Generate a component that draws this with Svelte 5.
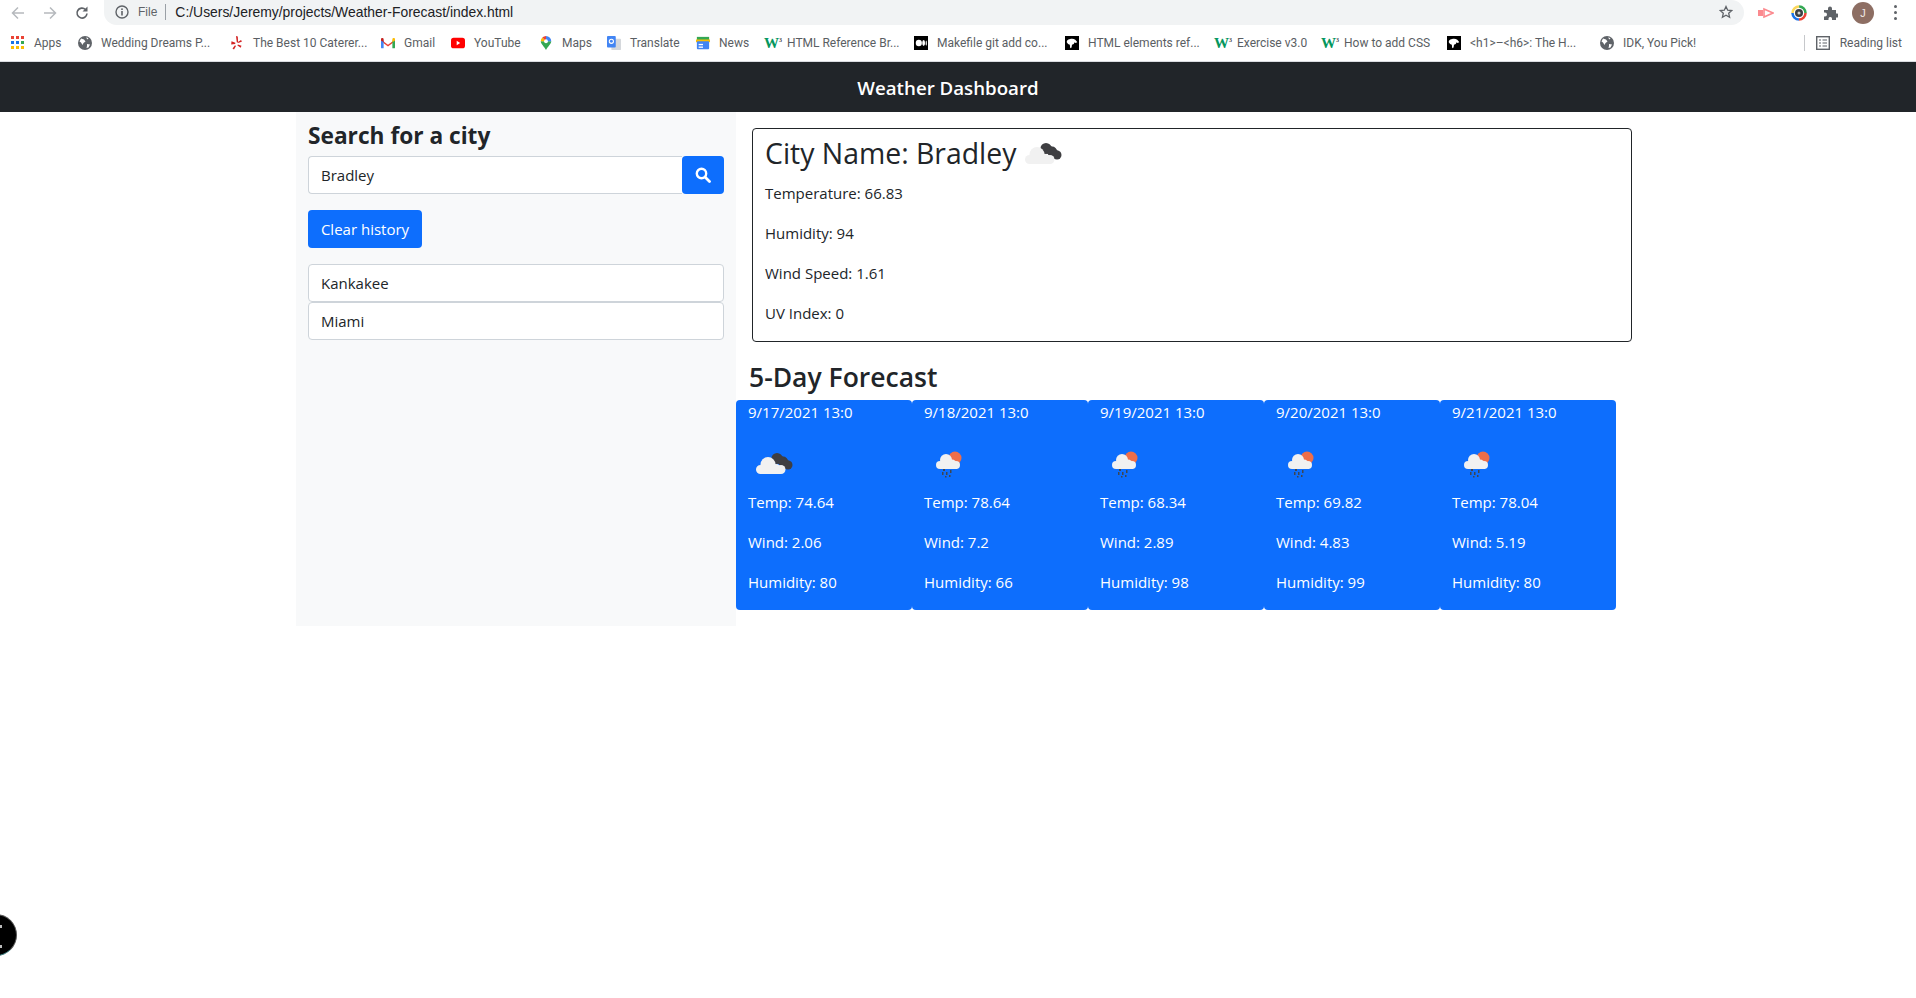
<script>
  const bookmarks = [
    { name: 'Apps', icon: 'apps', w: 67 },
    { name: 'Wedding Dreams P...', icon: 'globe', w: 152 },
    { name: 'The Best 10 Caterer...', icon: 'yelp', w: 151 },
    { name: 'Gmail', icon: 'gmail', w: 70 },
    { name: 'YouTube', icon: 'youtube', w: 88 },
    { name: 'Maps', icon: 'maps', w: 68 },
    { name: 'Translate', icon: 'translate', w: 89 },
    { name: 'News', icon: 'news', w: 68 },
    { name: 'HTML Reference Br...', icon: 'w3', w: 150 },
    { name: 'Makefile git add co...', icon: 'medium', w: 151 },
    { name: 'HTML elements ref...', icon: 'mdn', w: 149 },
    { name: 'Exercise v3.0', icon: 'w3', w: 107 },
    { name: 'How to add CSS', icon: 'w3', w: 126 },
    { name: '<h1>–<h6>: The H...', icon: 'mdn', w: 153 },
    { name: 'IDK, You Pick!', icon: 'globe', w: 110 }
  ]

  const forecast = [
    { date: '9/17/2021 13:0', temp: 74.64, wind: 2.06, humidity: 80, rain: false },
    { date: '9/18/2021 13:0', temp: 78.64, wind: 7.2, humidity: 66, rain: true },
    { date: '9/19/2021 13:0', temp: 68.34, wind: 2.89, humidity: 98, rain: true },
    { date: '9/20/2021 13:0', temp: 69.82, wind: 4.83, humidity: 99, rain: true },
    { date: '9/21/2021 13:0', temp: 78.04, wind: 5.19, humidity: 80, rain: true }
  ]

  const history = ['Kankakee', 'Miami']
</script>

{#snippet cloudy()}
  <svg class="weather" viewBox="0 0 50 50" aria-hidden="true">
    <g fill="#3f3f42">
      <circle cx="29" cy="18.500" r="5.500" />
      <circle cx="35" cy="21.500" r="5" />
      <circle cx="40" cy="25" r="4.500" />
      <path d="M25 20l6-6 13 9-4 6z" />
    </g>
    <g fill="#f1f1f1">
      <circle cx="12.500" cy="29.500" r="4.500" />
      <circle cx="20" cy="24.500" r="7.500" />
      <circle cx="28" cy="29" r="5" />
      <circle cx="33" cy="29.500" r="4.500" />
      <rect x="12" y="28" width="21" height="6" />
    </g>
  </svg>
{/snippet}

{#snippet rainy()}
  <svg class="weather" viewBox="0 0 50 50" aria-hidden="true">
    <circle cx="31" cy="18" r="6.500" fill="#ee6e49" />
    <g fill="#f1f1f1">
      <circle cx="16" cy="25" r="4" />
      <circle cx="22" cy="20" r="6" />
      <circle cx="28" cy="24" r="4.500" />
      <circle cx="32" cy="25" r="4" />
      <rect x="16" y="24" width="17" height="5" />
    </g>
    <g fill="#3f4650">
      <rect x="19" y="29" width="2" height="2" />
      <rect x="18" y="32" width="1.500" height="3" />
      <rect x="22" y="32" width="1.500" height="3" />
      <rect x="26" y="30" width="1.500" height="3" />
      <rect x="25" y="35" width="1.500" height="2" />
      <rect x="21" y="36" width="1.500" height="1.500" />
    </g>
  </svg>
{/snippet}

{#snippet bookmarkIcon(kind)}
  {#if kind === 'apps'}
    <svg class="bm-icon" viewBox="0 0 14 14">
      <g fill="#ea4335"><rect x="0" y="0" width="3" height="3" /><rect x="5" y="0" width="3" height="3" /><rect x="10" y="0" width="3" height="3" /></g>
      <g fill="#1a73e8"><rect x="0" y="5" width="3" height="3" /><rect x="5" y="5" width="3" height="3" /></g>
      <rect x="10" y="5" width="3" height="3" fill="#34a853" />
      <g fill="#fbbc04"><rect x="0" y="10" width="3" height="3" /><rect x="5" y="10" width="3" height="3" /></g>
      <rect x="10" y="10" width="3" height="3" fill="#fbbc04" />
    </svg>
  {:else if kind === 'globe'}
    <svg class="bm-icon" viewBox="0 0 14 14">
      <circle cx="7" cy="7" r="7" fill="#5f6368" />
      <path fill="#fff" d="M3 2.500l3 1 1.500 2-2 1.500-1 2-1.500-2.500-1.500-1zM9 8l3 .5-1.500 3-2 .5.500-2zM8 1.500l2.500.5-1 1.500z" />
    </svg>
  {:else if kind === 'yelp'}
    <svg class="bm-icon" viewBox="0 0 14 14" fill="#d32323">
      <path d="M6 0l1.800.4.300 5.800-1.300.3zM1.500 5.300l3.900 1.400-.2 1.300-4 .4zM5 9.300l1 .8-2 3.500-1.500-1.100zM7.900 8.600l3.600 1.200-.8 1.900-3.300-2.100zM8 6l3-2.100 1 1.700-3.600 1.400z" />
    </svg>
  {:else if kind === 'gmail'}
    <svg class="bm-icon" viewBox="0 0 16 12">
      <path fill="#ea4335" d="M0 2l8 6 8-6v2L8 10 0 4z" />
      <path fill="#4285f4" d="M0 3h3v9H1a1 1 0 0 1-1-1z" />
      <path fill="#34a853" d="M13 3h3v8a1 1 0 0 1-1 1h-2z" />
      <path fill="#c5221f" d="M0 2a1.500 1.500 0 0 1 3-.5V5L0 3z" />
      <path fill="#fbbc04" d="M16 2a1.500 1.500 0 0 0-3-.5V5l3-2z" />
    </svg>
  {:else if kind === 'youtube'}
    <svg class="bm-icon" viewBox="0 0 16 12">
      <rect width="16" height="12" rx="3" fill="#f00" />
      <path d="M6.500 3.500l4 2.500-4 2.500z" fill="#fff" />
    </svg>
  {:else if kind === 'maps'}
    <svg class="bm-icon" viewBox="0 0 12 16">
      <path fill="#34a853" d="M6 16C4 12 0 9 0 6h12c0 3-4 6-6 10z" />
      <path fill="#fbbc04" d="M0 6a6 6 0 0 1 1.800-4.200L6 6z" />
      <path fill="#4285f4" d="M6 0a6 6 0 0 1 6 6H6z" />
      <path fill="#ea4335" d="M1.800 1.800A6 6 0 0 1 6 0v6z" />
      <circle cx="6" cy="6" r="2.200" fill="#fff" />
    </svg>
  {:else if kind === 'translate'}
    <svg class="bm-icon" viewBox="0 0 16 16">
      <rect x="5" y="3" width="11" height="13" rx="1" fill="#d5d8dc" />
      <rect x="0" y="0" width="10" height="13" rx="1" fill="#4285f4" />
      <circle cx="5" cy="6" r="2.400" fill="none" stroke="#fff" stroke-width="1.200" />
    </svg>
  {:else if kind === 'news'}
    <svg class="bm-icon" viewBox="0 0 16 16">
      <rect x="1" y="1" width="14" height="4" fill="#34a853" />
      <rect x="0" y="4" width="16" height="3" fill="#fbbc04" />
      <rect x="1" y="6" width="14" height="9" rx="1" fill="#4285f4" />
      <rect x="3" y="9" width="5" height="1.500" fill="#fff" />
      <rect x="3" y="12" width="5" height="1.500" fill="#fff" />
    </svg>
  {:else if kind === 'w3'}
    <span class="w3">W<sup>3</sup></span>
  {:else if kind === 'medium'}
    <svg class="bm-icon" viewBox="0 0 16 16">
      <rect width="16" height="16" fill="#000" />
      <ellipse cx="5.500" cy="8" rx="3.500" ry="3.800" fill="#fff" />
      <ellipse cx="11" cy="8" rx="1.600" ry="3.400" fill="#fff" />
      <ellipse cx="14" cy="8" rx=".7" ry="3" fill="#fff" />
    </svg>
  {:else if kind === 'mdn'}
    <svg class="bm-icon" viewBox="0 0 16 16">
      <rect width="16" height="16" fill="#000" />
      <path fill="#fff" d="M2 7c0-3 3-4 6-4s5 2 6 4l-2 1-1-1-1 2-2 1-.5 3-1.500 1-.5-4-2-1z" />
    </svg>
  {/if}
{/snippet}

<div class="toolbar">
  <div class="nav-icons">
    <svg viewBox="0 0 14 14" class="nav-btn"><path d="M13 7H2M7 1.500L1.500 7 7 12.500" fill="none" stroke="#b6b9bd" stroke-width="1.500" /></svg>
    <svg viewBox="0 0 14 14" class="nav-btn"><path d="M1 7h11M7 1.500L12.500 7 7 12.500" fill="none" stroke="#b6b9bd" stroke-width="1.500" /></svg>
    <svg viewBox="0 0 14 14" class="nav-btn reload"><path d="M12 7.500A5 5 0 1 1 10.500 3.500" fill="none" stroke="#5f6368" stroke-width="1.600" /><path d="M12.500 .5v5h-5z" fill="#5f6368" /></svg>
  </div>
  <div class="omnibox">
    <svg viewBox="0 0 14 14" class="info"><circle cx="7" cy="7" r="6" fill="none" stroke="#5f6368" stroke-width="1.400" /><rect x="6.200" y="6" width="1.600" height="4.500" fill="#5f6368" /><rect x="6.200" y="3.400" width="1.600" height="1.600" fill="#5f6368" /></svg>
    <span class="scheme">File</span>
    <span class="sep"></span>
    <span class="url">C:/Users/Jeremy/projects/Weather-Forecast/index.html</span>
    <svg viewBox="0 0 14 14" class="star"><path d="M7 1.500l1.700 3.700 4 .4-3 2.700.9 4L7 10.300l-3.600 2 .9-4-3-2.700 4-.4z" fill="none" stroke="#5f6368" stroke-width="1.300" /></svg>
  </div>
  <div class="extensions">
    <svg viewBox="0 0 16 10" class="ext"><rect x="0" y="2" width="5" height="6" fill="#fb8a8f" /><path d="M6 1l9 4-9 4z" fill="none" stroke="#fb8a8f" stroke-width="1.600" /></svg>
    <svg viewBox="0 0 16 16" class="ext color"><circle cx="8" cy="8" r="6.500" fill="none" stroke="#ea4335" stroke-width="2.500" stroke-dasharray="10 31" /><circle cx="8" cy="8" r="6.500" fill="none" stroke="#1a73e8" stroke-width="2.500" stroke-dasharray="10 31" stroke-dashoffset="-10" /><circle cx="8" cy="8" r="6.500" fill="none" stroke="#fbd75b" stroke-width="2.500" stroke-dasharray="10 31" stroke-dashoffset="-20" /><circle cx="8" cy="8" r="6.500" fill="none" stroke="#34a853" stroke-width="2.500" stroke-dasharray="10 31" stroke-dashoffset="-30" /><circle cx="8" cy="8" r="4" fill="#3c4043" /><circle cx="8" cy="8" r="1.500" fill="#ccc" /></svg>
    <svg viewBox="0 0 14 14" class="ext puzzle"><path fill="#5f6368" d="M0 4h4V2.500a2 2 0 0 1 4 0V4h4v3.500h1a2 2 0 0 1 0 4h-1V14H8v-1.500a1.800 1.800 0 0 0-3.500 0V14H0v-3.500h1a2 2 0 0 0 0-4H0z" /></svg>
    <span class="avatar">J</span>
    <span class="dots"><i></i><i></i><i></i></span>
  </div>
</div>

<div class="bookmarks">
  <div class="bm-list">
    {#each bookmarks as bm}
      <span class="bm" style="width: {bm.w}px">
        <span class="bm-slot">{@render bookmarkIcon(bm.icon)}</span>
        <span class="bm-name">{bm.name}</span>
      </span>
    {/each}
  </div>
  <div class="reading">
    <svg viewBox="0 0 14 14" class="bm-icon"><rect x=".7" y=".7" width="12.600" height="12.600" fill="none" stroke="#5f6368" stroke-width="1.400" /><path d="M3 4h2M6.500 4H11M3 7h2M6.500 7H11M3 10h2M6.500 10H11" stroke="#5f6368" stroke-width="1.200" /></svg>
    <span class="bm-name">Reading list</span>
  </div>
</div>

<header class="navbar">
  <span class="brand">Weather Dashboard</span>
</header>

<main class="page">
  <aside class="sidebar">
    <h2 class="search-title">Search for a city</h2>
    <form class="search" on:submit|preventDefault>
      <input type="text" value="Bradley" />
      <button class="btn search-btn" type="submit" aria-label="Search">
        <svg viewBox="0 0 16 16"><circle cx="6.500" cy="6.500" r="4.700" fill="none" stroke="#fff" stroke-width="2.400" /><path d="M10 10l4.500 4.500" stroke="#fff" stroke-width="2.800" stroke-linecap="round" /></svg>
      </button>
    </form>
    <button class="btn clear" type="button">Clear history</button>
    <ul class="history">
      {#each history as city}
        <li>{city}</li>
      {/each}
    </ul>
  </aside>

  <section class="content">
    <div class="today">
      <h2 class="city">City Name: Bradley {@render cloudy()}</h2>
      <p>Temperature: 66.83</p>
      <p>Humidity: 94</p>
      <p>Wind Speed: 1.61</p>
      <p>UV Index: 0</p>
    </div>

    <h3 class="forecast-title">5-Day Forecast</h3>
    <div class="forecast">
      {#each forecast as day}
        <div class="day">
          <p>{day.date}</p>
          <div class="day-icon">
            {#if day.rain}{@render rainy()}{:else}{@render cloudy()}{/if}
          </div>
          <p>Temp: {day.temp}</p>
          <p>Wind: {day.wind}</p>
          <p>Humidity: {day.humidity}</p>
        </div>
      {/each}
    </div>
  </section>
</main>

<div class="launcher"><i></i><i></i></div>

<style>
  :global(body) {
    margin: 0;
    background: #fff;
    color: #212529;
    font-family: "Open Sans", "Noto Sans", sans-serif;
    font-size: 15px;
    line-height: 24px;
  }

  .toolbar {
    display: flex;
    height: 25px;
    overflow: hidden;
  }
  .nav-icons {
    display: flex;
    align-items: center;
    gap: 18px;
    width: 104px;
    padding-left: 11px;
    box-sizing: border-box;
  }
  .nav-btn {
    width: 14px;
    height: 14px;
  }
  .omnibox {
    display: flex;
    align-items: center;
    width: 1640px;
    height: 25px;
    padding: 0 11px 2px;
    box-sizing: border-box;
    background: #f1f3f4;
    border-radius: 0 14px 14px 14px;
    font-size: 12px;
    font-family: "Liberation Sans", sans-serif;
  }
  .info {
    width: 14px;
    height: 14px;
  }
  .scheme {
    margin-left: 9px;
    color: #5f6368;
  }
  .sep {
    width: 1px;
    height: 16px;
    margin: 0 9px 0 8px;
    background: #9aa0a6;
  }
  .url {
    color: #202124;
    flex: 1;
    font-size: 13.9px;
  }
  .star {
    width: 14px;
    height: 14px;
  }
  .extensions {
    display: flex;
    align-items: center;
    padding-left: 14px;
  }
  .ext {
    width: 16px;
    height: 16px;
    margin-right: 17px;
  }
  .puzzle {
    width: 14px;
    height: 14px;
    margin-right: 14px;
  }
  .avatar {
    width: 22px;
    height: 22px;
    border-radius: 50%;
    background: #8d6e63;
    color: #f1e9e5;
    font: 11px/22px "Liberation Sans", sans-serif;
    text-align: center;
  }
  .dots {
    display: flex;
    flex-direction: column;
    gap: 3px;
    margin-left: 20px;
  }
  .dots i {
    width: 3px;
    height: 3px;
    border-radius: 50%;
    background: #5f6368;
  }

  .bookmarks {
    display: flex;
    align-items: center;
    justify-content: space-between;
    height: 36px;
    padding: 0 14px 0 11px;
    border-bottom: 1px solid #dadce0;
    font-family: "Roboto", sans-serif;
    font-size: 12px;
    color: #5a5e63;
  }
  .bm-list {
    display: flex;
  }
  .bm {
    display: flex;
    align-items: center;
    white-space: nowrap;
  }
  .bm-slot {
    display: flex;
    width: 16px;
    margin-right: 7px;
  }
  .bm-icon {
    width: 14px;
    height: 14px;
    flex: none;
  }
  .w3 {
    color: #04965d;
    font: bold 15px/15px "Liberation Serif", serif;
  }
  .w3 sup {
    font-size: 6px;
    line-height: 0;
    color: #444;
  }
  .reading {
    display: flex;
    align-items: center;
    gap: 10px;
    border-left: 1px solid #c6c8cb;
    padding-left: 11px;
    height: 16px;
  }

  .navbar {
    display: flex;
    justify-content: center;
    align-items: center;
    height: 50px;
    box-sizing: border-box;
    padding: 2px 20px 0 0;
    background: #212529;
    color: #fff;
  }
  .brand {
    font-size: 18.7px;
    font-weight: 600;
  }

  .page {
    display: flex;
    margin-left: 296px;
  }

  .sidebar {
    width: 440px;
    box-sizing: border-box;
    padding: 9px 12px 0;
    background: #f8f9fa;
  }
  .search-title {
    margin: 0 0 6px;
    font-size: 22.7px;
    font-weight: 700;
    line-height: 29px;
  }
  .search {
    display: flex;
    margin-bottom: 16px;
  }
  input {
    flex: 1;
    height: 38px;
    min-width: 0;
    box-sizing: border-box;
    padding: 0 12px;
    border: 1px solid #ced4da;
    border-right: 0;
    border-radius: 4px 0 0 4px;
    background: #fff;
    color: #212529;
    font: inherit;
  }
  .btn {
    height: 38px;
    border: 0;
    border-radius: 4px;
    background: #0d6efd;
    color: #fff;
    font: inherit;
  }
  .search-btn {
    display: flex;
    align-items: center;
    justify-content: center;
    width: 42px;
    padding: 0;
  }
  .search-btn svg {
    width: 16px;
    height: 16px;
  }
  .clear {
    display: block;
    width: 114px;
    padding: 0;
    margin-bottom: 16px;
  }
  .history {
    list-style: none;
    margin: 0;
    padding: 0;
  }
  .history li {
    height: 38px;
    box-sizing: border-box;
    padding: 6px 12px;
    border: 1px solid #ced4da;
    border-radius: 4px;
    background: #fff;
  }

  .content {
    flex: 1;
    padding: 16px 0 16px;
  }
  p {
    margin: 0 0 16px;
  }
  .today {
    width: 880px;
    height: 214px;
    box-sizing: border-box;
    margin-left: 16px;
    padding: 1px 12px 0;
    border: 1px solid #212529;
    border-radius: 4px;
  }
  .city {
    display: flex;
    gap: 1px;
    height: 44px;
    margin: 0 0 7px;
    font-size: 28.4px;
    font-weight: 400;
    line-height: 46px;
  }
  .weather {
    width: 50px;
    height: 50px;
    flex: none;
  }
  .forecast-title {
    margin: 18px 0 6px 13px;
    font-size: 26.5px;
    font-weight: 600;
    line-height: 34px;
  }
  .forecast {
    display: flex;
    width: 880px;
  }
  .day {
    width: 176px;
    height: 210px;
    box-sizing: border-box;
    padding: 0 12px;
    border-radius: 4px;
    background: #0d6efd;
    color: #fff;
  }
  .day-icon {
    height: 50px;
  }

  .launcher {
    position: fixed;
    left: -25px;
    top: 914px;
    width: 40px;
    height: 40px;
    border: 1px solid #555;
    border-bottom-color: #3b7a7e;
    border-radius: 50%;
    background: #000;
  }
  .launcher i {
    position: absolute;
    left: 24px;
    width: 2px;
    height: 3px;
    background: #bbb;
  }
  .launcher i:first-child {
    top: 10px;
  }
  .launcher i:last-child {
    top: 30px;
  }
</style>
